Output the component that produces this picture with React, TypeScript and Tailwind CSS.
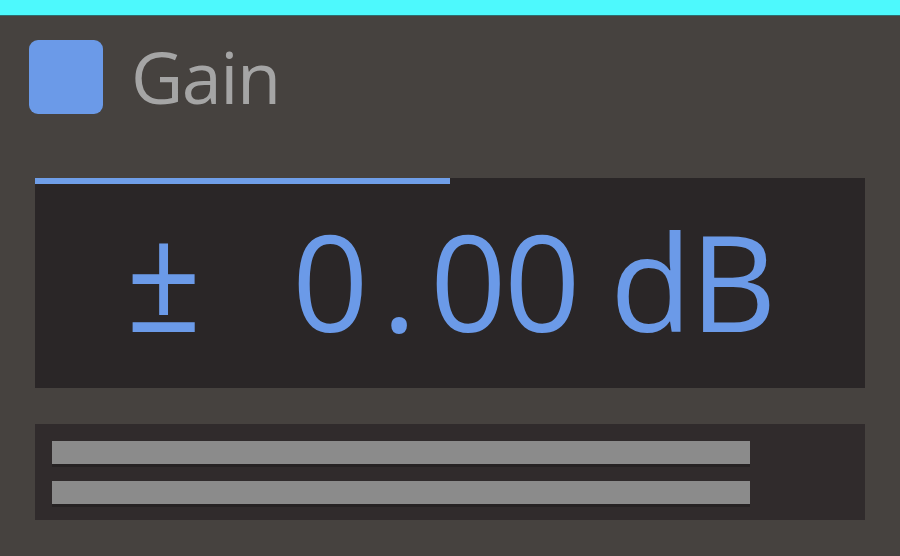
export default function App() {
  return (
    <div className="w-[900px] h-[556px] bg-[#46423f] flex flex-col overflow-hidden" style={{ fontFamily: '"Open Sans", "Noto Sans", sans-serif' }}>
      <div className="h-[16px] shrink-0 bg-[#4df9fd] border-b border-[#2f6d6f]" />
      {/* Header */}
      <div className="flex items-start h-[162px] shrink-0 pl-[29px] pt-[24px]">
        <div className="w-[74px] h-[74px] rounded-[9px] bg-[#6b9ae8]" />
        <span className="ml-[28px] text-[72px] tracking-[-1.5px] leading-none text-[#a5a5a5]">Gain</span>
      </div>
      {/* Value display */}
      <div className="mx-[35px] h-[210px] shrink-0 bg-[#2a2627] flex flex-col">
        <div className="w-[415px] h-[6px] bg-[#6f9ee8]" />
        <div className="flex items-start pl-[91px] pt-[29px] text-[#6b9ae8] leading-none text-[134px]">
          <span className="w-[64px] text-center text-[132px] mt-[4px] scale-y-[1.12] origin-bottom">±</span>
          <span className="w-[76px] ml-[102px] text-center">0</span>
          <span className="w-[62px] text-center">.</span>
          <span className="w-[74px] text-center">0</span>
          <span className="w-[76px] text-center">0</span>
          <span className="w-[102px] ml-[20px] text-center">d</span>
          <span className="w-[66px] -ml-[12px] text-center">B</span>
        </div>
      </div>
      {/* Meter */}
      <div className="mx-[35px] mt-[36px] h-[96px] shrink-0 bg-[#302b2c] flex flex-col gap-[17px] pt-[17px] pl-[17px]">
        <div className="w-[698px] h-[23px] bg-[#8b8b8b] shadow-[0_3px_0_#262223]" />
        <div className="w-[698px] h-[23px] bg-[#8b8b8b] shadow-[0_3px_0_#262223]" />
      </div>
    </div>
  )
}
